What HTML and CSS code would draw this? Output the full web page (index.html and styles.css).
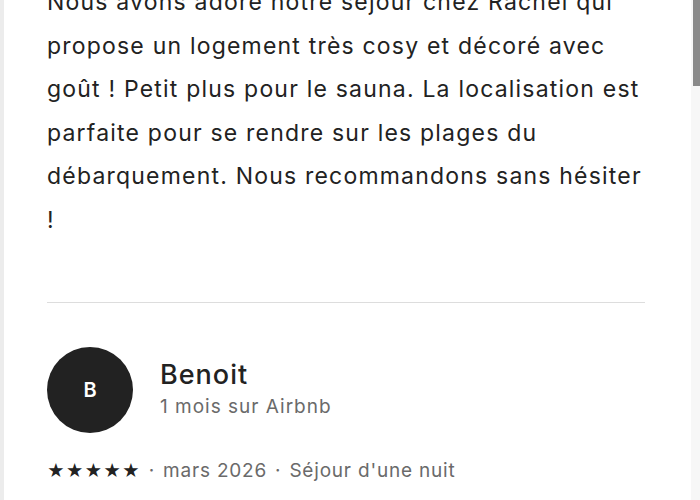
FILE: index.html
```html
<!DOCTYPE html>
<html lang="fr">
<head>
  <meta charset="UTF-8" />
  <meta name="viewport" content="width=device-width, initial-scale=1.0"/>
  <title>Commentaires</title>
  <link rel="stylesheet" href="styles.css">
</head>
<body>

  <div class="reviews">

    <!-- previous review (scrolled) -->
    <div class="review first">
      <p class="review-text">
        Nous avons adoré notre séjour chez Rachel qui propose un logement très cosy et décoré avec goût ! Petit plus pour le sauna. La localisation est parfaite pour se rendre sur les plages du débarquement. Nous recommandons sans hésiter !
      </p>
    </div>

    <hr class="divider">

    <div class="review">
      <div class="review-head">
        <div class="avatar">B</div>
        <div class="who">
          <div class="name">Benoit</div>
          <div class="since">1 mois sur Airbnb</div>
        </div>
      </div>
      <div class="meta">
        <span class="stars">★★★★★</span>
        <span class="dot">·</span>
        <span>mars 2026</span>
        <span class="dot">·</span>
        <span>Séjour d'une nuit</span>
      </div>
    </div>

  </div>

  <!-- page scrollbar -->
  <div class="scroll-track"><div class="scroll-thumb"></div></div>

</body>
</html>
```

FILE: styles.css
```css
body {
  font-family: 'Inter', 'Liberation Sans', sans-serif;
  background: #ffffff;
  color: #222222;
  margin: 0;
  padding: 0;
  min-height: 100vh;
  border-left: 4px solid #ececec;
  overflow: hidden;
}

.scroll-track {
  position: fixed;
  top: 0;
  right: 0;
  width: 9px;
  height: 100%;
  background: #f7f7f7;
}

.scroll-thumb {
  margin-left: 2px;
  width: 7px;
  height: 86px;
  background: #8a8a8a;
}

.reviews {
  width: 598px;
  padding-left: 43px;
}

.review.first {
  margin-top: -19px;
}

.review-text {
  margin: 0;
  font-size: 23px;
  letter-spacing: 1.2px;
  line-height: 43.5px;
  color: #222222;
}

.divider {
  border: none;
  border-top: 1px solid #dddddd;
  margin: 60px 0 44px;
}

.review-head {
  display: flex;
  align-items: center;
  gap: 27px;
}

.avatar {
  width: 86px;
  height: 86px;
  border-radius: 50%;
  background: #222222;
  color: #ffffff;
  display: flex;
  align-items: center;
  justify-content: center;
  font-size: 20px;
  font-weight: 600;
}

.name {
  font-size: 27px;
  font-weight: 500;
  letter-spacing: 1px;
  line-height: 34px;
}

.since {
  font-size: 19px;
  letter-spacing: 1px;
  color: #6a6a6a;
  line-height: 30px;
}

.meta {
  margin-top: 26px;
  display: flex;
  align-items: center;
  gap: 8px;
  font-size: 19px;
  letter-spacing: 0.8px;
  color: #6a6a6a;
}

.stars {
  color: #222222;
  font-size: 17px;
  letter-spacing: 1px;
}
```
